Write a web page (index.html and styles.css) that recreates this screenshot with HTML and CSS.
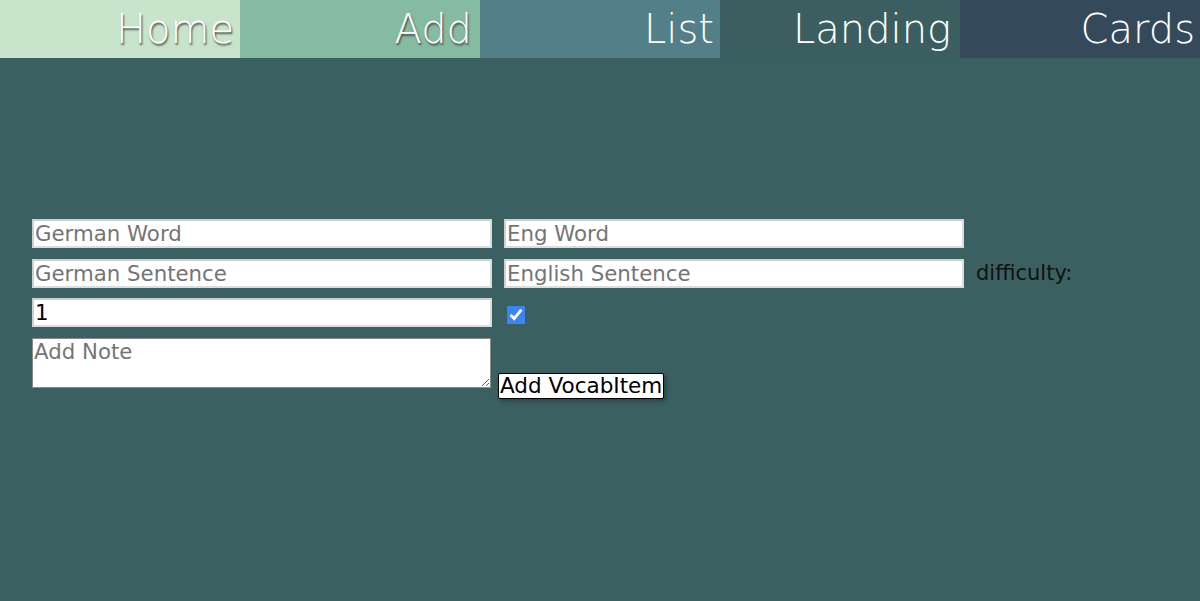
FILE: index.html
```html
<!DOCTYPE html>
<html lang="en">
<head>
<meta charset="utf-8">
<title>Vocab</title>
<link rel="stylesheet" href="styles.css">
</head>
<body>
<nav class="nav">
  <a class="nav-item nav-home" href="#">Home</a>
  <a class="nav-item nav-add" href="#">Add</a>
  <a class="nav-item nav-list" href="#">List</a>
  <a class="nav-item nav-landing" href="#">Landing</a>
  <a class="nav-item nav-cards" href="#">Cards</a>
</nav>
<main class="content">
  <form class="vocab-form">
    <div class="form-row">
      <input class="field" type="text" placeholder="German Word">
      <input class="field" type="text" placeholder="Eng Word">
    </div>
    <div class="form-row">
      <input class="field" type="text" placeholder="German Sentence">
      <input class="field" type="text" placeholder="English Sentence">
      <label class="label">difficulty:</label>
    </div>
    <div class="form-row">
      <input class="field" type="number" value="1">
      <input class="check" type="checkbox" checked>
    </div>
    <div class="form-row form-row-last">
      <textarea class="note" placeholder="Add Note"></textarea>
      <button class="submit" type="button">Add VocabItem</button>
    </div>
  </form>
</main>
</body>
</html>
```

FILE: styles.css
```css
html, body {
  margin: 0;
  padding: 0;
}
body {
  background: #3b6062;
  font-family: "DejaVu Sans", sans-serif;
  height: 601px;
  overflow: hidden;
}
.nav {
  display: flex;
  height: 58px;
}
.nav-item {
  box-sizing: border-box;
  flex: 0 0 20%;
  text-align: right;
  padding-right: 6px;
  font-size: 40px;
  font-weight: 200;
  line-height: 58px;
  color: #ffffff;
  text-decoration: none;
}
.nav-home {
  background: #c8e4cb;
  text-shadow: 1px 2px 2px #4a4a4a;
}
.nav-add {
  background: #85bba1;
  text-shadow: 1px 2px 2px #4a4a4a;
  padding-right: 8px;
}
.nav-list {
  background: #537f88;
}
.nav-landing {
  background: #3b5f60;
  padding-right: 9px;
}
.nav-cards {
  background: #34495a;
  padding-right: 5px;
}
.content {
  padding: 161px 0 0 32px;
}
.vocab-form {
  display: flex;
  flex-direction: column;
  gap: 10.5px;
}
.form-row {
  display: flex;
  align-items: center;
  gap: 12px;
  height: 29px;
}
.form-row-last {
  align-items: flex-start;
  height: auto;
  gap: 7px;
}
.field {
  box-sizing: border-box;
  width: 460px;
  height: 29px;
  margin: 0;
  padding: 1px 1px;
  border: 2px solid;
  border-color: #cfcfcf #dcdcdc #dcdcdc #cfcfcf;
  background: #ffffff;
  font-family: "DejaVu Sans", sans-serif;
  font-size: 21.3px;
  color: #000000;
}
.field::placeholder,
.note::placeholder {
  color: #757575;
}
.label {
  font-size: 21px;
  color: #111111;
}
.check {
  width: 18px;
  height: 18px;
  margin: 4px 0 0 3px;
  accent-color: #3a84f5;
}
.note {
  box-sizing: border-box;
  width: 459px;
  height: 50px;
  margin: 0;
  padding: 0 1px;
  border: 1px solid #8a8a8a;
  background: #ffffff;
  font-family: "DejaVu Sans", sans-serif;
  font-size: 21.3px;
  resize: vertical;
}
.submit {
  margin-top: 35px;
  height: 26px;
  padding: 0 1px;
  background: #ffffff;
  border: 1px solid #000000;
  border-radius: 2px;
  box-shadow: 2px 2px 4px rgba(0, 0, 0, 0.35);
  font-family: "DejaVu Sans", sans-serif;
  font-size: 21.5px;
  line-height: 24px;
  color: #000000;
}
```
